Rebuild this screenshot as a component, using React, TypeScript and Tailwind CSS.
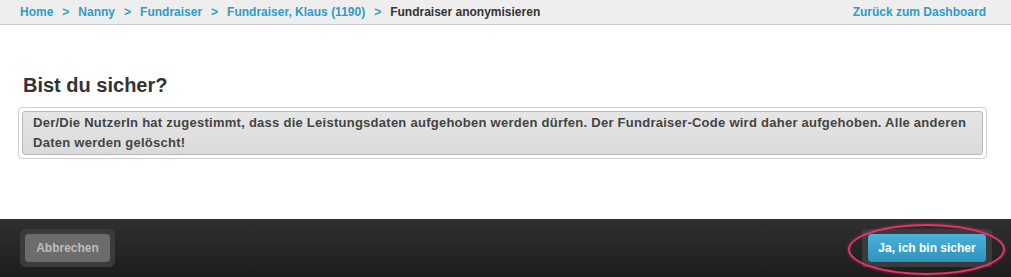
import React from "react";

const crumbs = ["Home", "Nanny", "Fundraiser", "Fundraiser, Klaus (1190)"];

const Breadcrumbs = () => {
  return (
    <div className="h-[25px] bg-[#eeeeee] border-b border-[#cccccc] flex items-center justify-between pl-[20px] pr-[25px] text-[12px] font-bold leading-[24px]">
      <div className="flex items-center">
        {crumbs.map((c) => (
          <React.Fragment key={c}>
            <a href="#" className="text-[#2f9bc9]">
              {c}
            </a>
            <span className="text-[#2f9bc9] px-[9px]">&gt;</span>
          </React.Fragment>
        ))}
        <span className="text-[#333333]">Fundraiser anonymisieren</span>
      </div>
      <a href="#" className="text-[#2f9bc9]">
        Zurück zum Dashboard
      </a>
    </div>
  );
};

const App = () => {
  return (
    <div className="h-[277px] w-full flex flex-col bg-white font-['Liberation_Sans',Arial,sans-serif] overflow-hidden">
      <Breadcrumbs />

      <main className="flex-1 pt-[48px] px-[18px] pr-[24px]">
        <h1 className="text-[20px] leading-[24px] font-bold text-[#333333] pl-[5px]">
          Bist du sicher?
        </h1>
        <div className="mt-[10px] border border-[#cfcfcf] rounded-[4px] p-[3px] bg-white">
          <div className="border border-[#b9b9b9] rounded-[3px] bg-gradient-to-b from-[#e6e6e6] to-[#dadada] px-[10px] py-[1px] text-[13px] tracking-[0.26px] leading-[20px] font-bold text-[#444444]">
            Der/Die NutzerIn hat zugestimmt, dass die Leistungsdaten aufgehoben
            werden dürfen. Der Fundraiser-Code wird daher aufgehoben. Alle
            anderen Daten werden gelöscht!
          </div>
        </div>
      </main>

      <footer className="h-[58px] bg-gradient-to-b from-[#303030] to-[#1d1d1d] flex items-center justify-between pl-[20px] pr-[19px]">
        <div className="bg-[#3b3b3b] rounded-[6px] p-[5px]">
          <button className="h-[28px] w-[85px] rounded-[4px] bg-[#6c6c6c] text-[#bcbcbc] text-[12px] font-bold">
            Abbrechen
          </button>
        </div>
        <div className="relative">
          <div className="bg-[#3b3b3b] rounded-[3px] px-[6px] py-[5px]">
            <button className="h-[28px] w-[118px] rounded-[4px] bg-gradient-to-b from-[#4ab1da] to-[#2e93bd] text-white text-[12px] font-bold">
              Ja, ich bin sicher
            </button>
          </div>
          <div className="absolute -left-[14px] -right-[13px] -top-[5px] -bottom-[8px] rounded-[50%] border-[2.5px] border-[#e8336a] shadow-[0_0_3px_rgba(232,51,106,0.7)] pointer-events-none" />
        </div>
      </footer>
    </div>
  );
};

export default App;
